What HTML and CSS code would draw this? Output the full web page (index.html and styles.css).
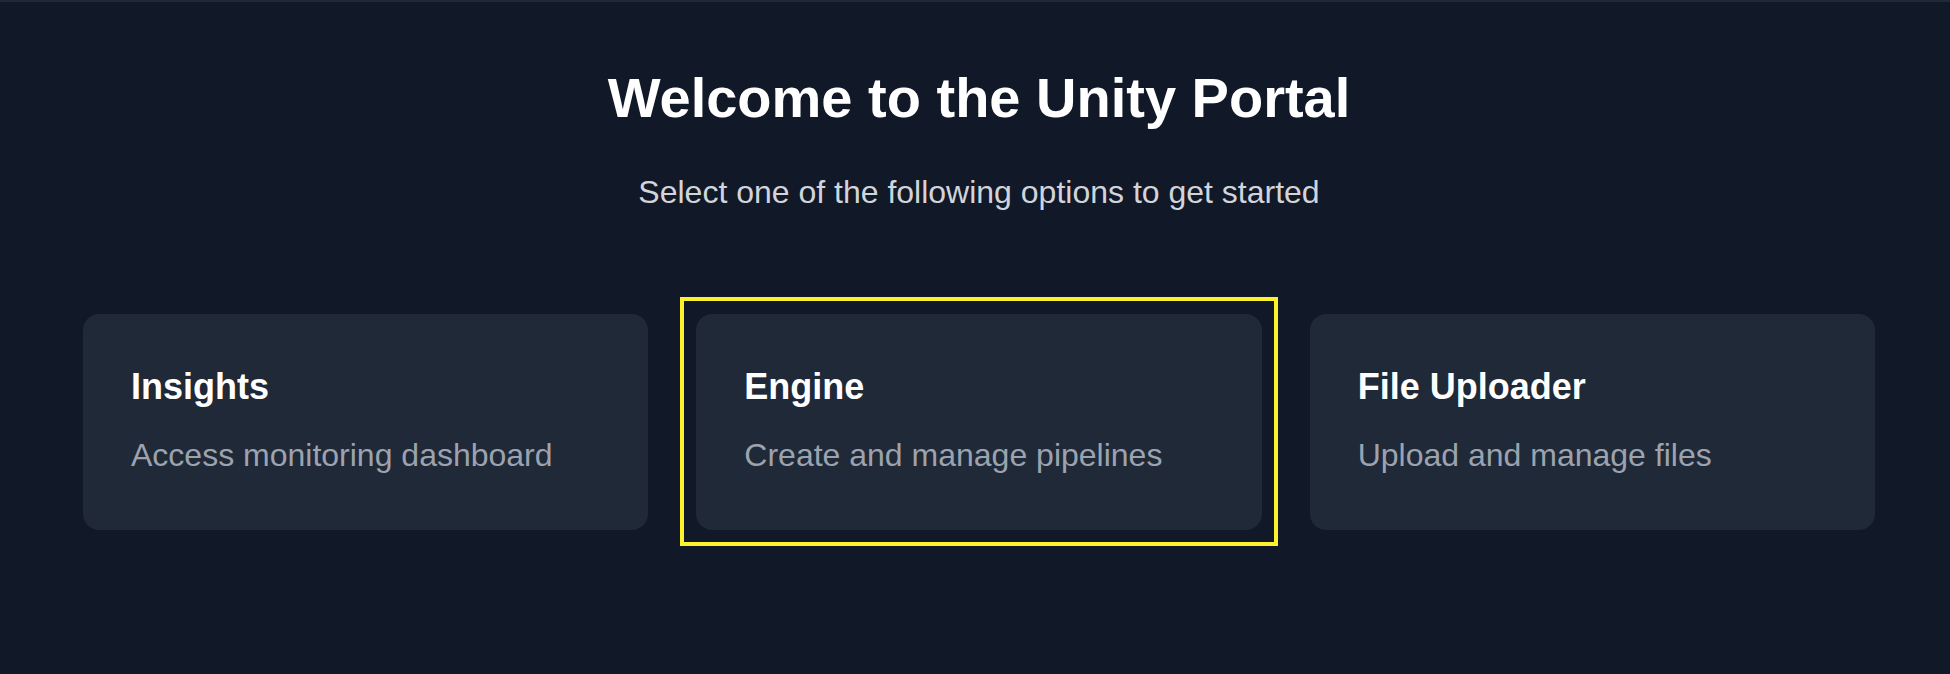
FILE: index.html
```html
<!DOCTYPE html>
<html lang="en">
<head>
<meta charset="utf-8">
<title>Unity Portal</title>
<link rel="stylesheet" href="styles.css">
</head>
<body>
<main class="portal">
  <h1 class="portal-title">Welcome to the Unity Portal</h1>
  <p class="portal-subtitle">Select one of the following options to get started</p>
  <div class="card-grid">
    <a class="card" href="#">
      <h2 class="card-title">Insights</h2>
      <p class="card-desc">Access monitoring dashboard</p>
    </a>
    <a class="card card-selected" href="#">
      <h2 class="card-title">Engine</h2>
      <p class="card-desc">Create and manage pipelines</p>
    </a>
    <a class="card" href="#">
      <h2 class="card-title">File Uploader</h2>
      <p class="card-desc">Upload and manage files</p>
    </a>
  </div>
</main>
</body>
</html>
```

FILE: styles.css
```css
html, body {
  margin: 0;
  padding: 0;
}

body {
  background: #111827;
  border-top: 2px solid #1f2937;
  min-height: 672px;
  font-family: "Liberation Sans", Arial, Helvetica, sans-serif;
  color: #ffffff;
}

.portal {
  padding: 68px 75px 0 83px;
  display: flex;
  flex-direction: column;
  align-items: center;
}

.portal-title {
  margin: 0 0 42px;
  font-size: 56px;
  line-height: 56px;
  font-weight: 700;
  color: #ffffff;
  text-align: center;
}

.portal-subtitle {
  margin: 0 0 98px;
  font-size: 32px;
  line-height: 48px;
  color: #d1d5db;
  text-align: center;
}

.card-grid {
  align-self: stretch;
  display: grid;
  grid-template-columns: repeat(3, 1fr);
  gap: 48px;
}

.card {
  display: block;
  position: relative;
  background: #1f2937;
  border-radius: 16px;
  padding: 45px 48px 51px;
  text-decoration: none;
}

.card-selected::after {
  content: "";
  position: absolute;
  top: -17px;
  left: -16px;
  right: -16px;
  bottom: -16px;
  border: 4px solid #fbf12c;
  pointer-events: none;
}

.card-title {
  margin: 0 0 16px;
  font-size: 36px;
  line-height: 56px;
  font-weight: 700;
  color: #ffffff;
}

.card-desc {
  margin: 0;
  font-size: 32px;
  line-height: 48px;
  color: #9ca3af;
}
```
